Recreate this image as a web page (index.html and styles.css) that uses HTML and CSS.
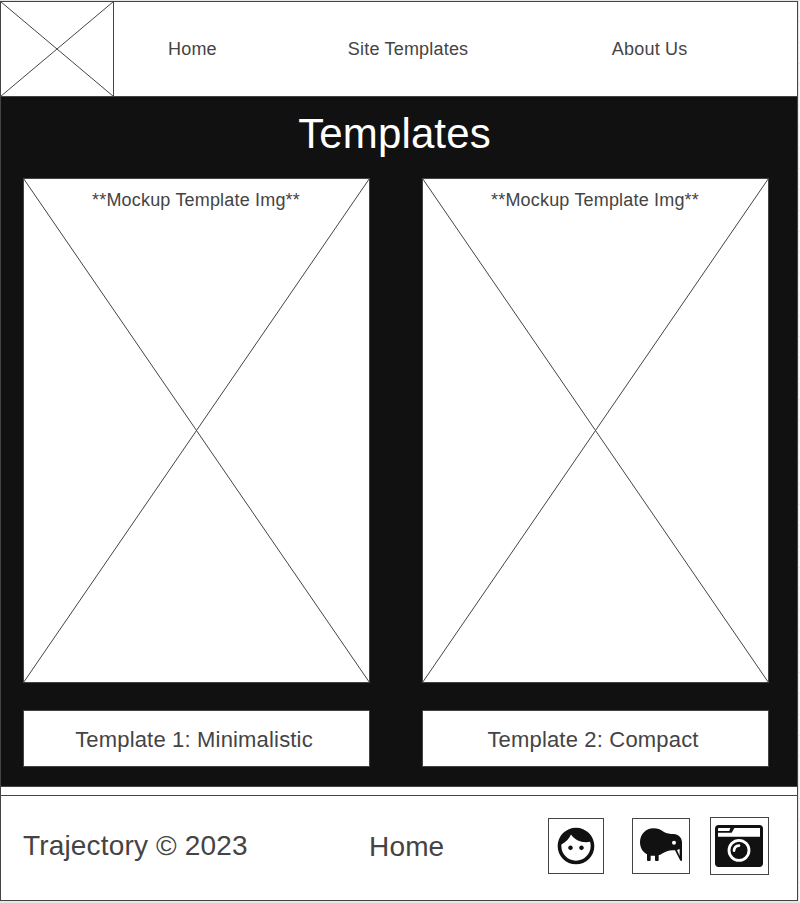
FILE: index.html
```html
<!DOCTYPE html>
<html lang="en">
<head>
<meta charset="utf-8">
<title>Templates</title>
<link rel="stylesheet" href="styles.css">
</head>
<body>
<div class="frame">
  <header class="header">
    <div class="logo">
      <svg class="cross" viewBox="0 0 114 96"><path d="M.5 .5 113.5 95.5M113.5 .5 .5 95.5"/></svg>
    </div>
    <nav class="nav">
      <a>Home</a>
      <a>Site Templates</a>
      <a>About Us</a>
    </nav>
  </header>
  <main class="main">
    <h1 class="title">Templates</h1>
    <div class="cards">
      <section class="card">
        <div class="preview">
          <svg class="cross" viewBox="0 0 347 505"><path d="M.5 .5 346.5 504.5M346.5 .5 .5 504.5"/></svg>
          <p>**Mockup Template Img**</p>
        </div>
        <div class="label">Template 1: Minimalistic</div>
      </section>
      <section class="card">
        <div class="preview">
          <svg class="cross" viewBox="0 0 347 505"><path d="M.5 .5 346.5 504.5M346.5 .5 .5 504.5"/></svg>
          <p>**Mockup Template Img**</p>
        </div>
        <div class="label">Template 2: Compact</div>
      </section>
    </div>
  </main>
  <footer class="footer">
    <span class="copyright">Trajectory © 2023</span>
    <a class="home">Home</a>
    <div class="icons">
      <div class="icon face">
        <svg width="44" height="44" viewBox="0 0 24 24"><path d="M9 11.75c-.69 0-1.25.56-1.25 1.25s.56 1.25 1.25 1.25 1.25-.56 1.25-1.25-.56-1.25-1.25-1.25zm6 0c-.69 0-1.25.56-1.25 1.25s.56 1.25 1.25 1.25 1.25-.56 1.25-1.25-.56-1.25-1.25-1.25zM12 2C6.48 2 2 6.48 2 12s4.48 10 10 10 10-4.48 10-10S17.52 2 12 2zm0 18c-4.41 0-8-3.59-8-8 0-.29.02-.58.05-.86 2.36-1.05 4.23-2.98 5.21-5.37C11.07 8.33 14.05 10 17.42 10c.78 0 1.53-.09 2.25-.26.21.71.33 1.47.33 2.26 0 4.41-3.59 8-8 8z"/></svg>
      </div>
      <div class="icon kiwi">
        <svg width="56" height="54" viewBox="24 27 168 162"><path fill-rule="evenodd" d="M85 55C100 55 108 60 117 66C125 71 135 72 146 72C160 72 171 83 171 97V149C171 154 167 154 165 150L150 121C133 119 122 125 113 130C109 133 105 135 101 136V150Q101 153 98 153H93Q90 153 90 150V137H77V150Q77 153 74 153H69Q66 153 66 150V133C52 125 45 112 45 96C45 73 63 55 85 55ZM147 92A6 6 0 1 0 147 104A6 6 0 1 0 147 92ZM156 120L164 117V138Z"/></svg>
      </div>
      <div class="icon camera">
        <svg width="57" height="56" viewBox="33 24 171 168">
          <rect x="45" y="45" width="144" height="126" rx="11"/>
          <path class="light" d="M103 54H180V80H54V68H95ZM54 57Q54 54 57 54H91L88 63H54Z"/>
          <circle class="ring" cx="117" cy="121" r="30"/>
          <path class="glint" d="M102 122Q103 108 117 107"/>
        </svg>
      </div>
    </div>
  </footer>
</div>
</body>
</html>
```
FILE: styles.css
```css
* { box-sizing: border-box; }

body {
  margin: 0;
  padding-top: 1px;
  height: 903px;
  background:
    repeating-linear-gradient(to bottom, #fcfcfc 0 20px, #e8e8e8 20px 21px) right 1px / 1px 900px no-repeat,
    #e6e6e6;
  color: #444;
  font-family: "Liberation Sans", Arial, sans-serif;
  overflow: hidden;
}

.frame {
  width: 798px;
  height: 900px;
  border: 1px solid #444;
  background: #fff;
}

.header {
  display: flex;
  height: 95px;
  border-bottom: 1px solid #444;
}

.logo {
  position: relative;
  width: 113px;
  border-right: 1px solid #444;
}

.cross {
  position: absolute;
  left: -1px;
  top: -1px;
  fill: none;
  stroke: #444;
  stroke-width: 1;
}
.logo .cross { width: 114px; height: 96px; }
.preview .cross { width: 347px; height: 505px; }

.nav {
  display: flex;
  align-items: center;
  gap: 131px;
  padding-left: 54px;
  font-size: 18px;
  line-height: 20px;
  letter-spacing: .011em;
}
.nav a:last-child { margin-left: 12.5px; }

.main {
  height: 690px;
  padding: 14px 0 0 22px;
  background: #111;
  border-bottom: 1px solid #444;
}

.title {
  margin: 0 0 21px;
  width: 743px;
  color: #fff;
  font-size: 42px;
  font-weight: 400;
  line-height: 46px;
  letter-spacing: .003em;
  text-align: center;
}

.cards { display: flex; gap: 52px; }

.card {
  display: flex;
  flex-direction: column;
  gap: 27px;
  width: 347px;
}

.preview {
  position: relative;
  height: 505px;
  border: 1px solid #444;
  background: #fff;
  text-align: center;
}
.preview p {
  margin: 11px 1px 0 0;
  font-size: 18px;
  line-height: 20px;
  letter-spacing: .01em;
}

.label {
  height: 57px;
  padding: 16px 5px 0 0;
  border: 1px solid #444;
  background: #fff;
  font-size: 22px;
  line-height: 26px;
  letter-spacing: .008em;
  text-align: center;
}

.footer {
  display: grid;
  grid-template-columns: 346px 179px 1fr;
  align-items: start;
  height: 105px;
  margin-top: 8px;
  padding: 21px 0 0 22px;
  border-top: 1px solid #444;
  font-size: 28px;
  line-height: 32px;
  letter-spacing: .006em;
}
.copyright { margin-top: 13px; }
.home { margin-top: 14px; }

.icons {
  display: flex;
  align-items: center;
}
.icon {
  display: flex;
  align-items: center;
  justify-content: center;
  border: 1px solid #444;
}
.icon svg { display: block; flex: none; fill: #111; }
.face { width: 56px; height: 56px; }
.kiwi { width: 58px; height: 56px; margin-left: 28px; }
.camera { width: 59px; height: 58px; margin-left: 20px; }
.camera .light { fill: #fff; }
.camera .ring { fill: none; stroke: #fff; stroke-width: 8.5; }
.camera .glint { fill: none; stroke: #fff; stroke-width: 8; stroke-linecap: round; }
```
